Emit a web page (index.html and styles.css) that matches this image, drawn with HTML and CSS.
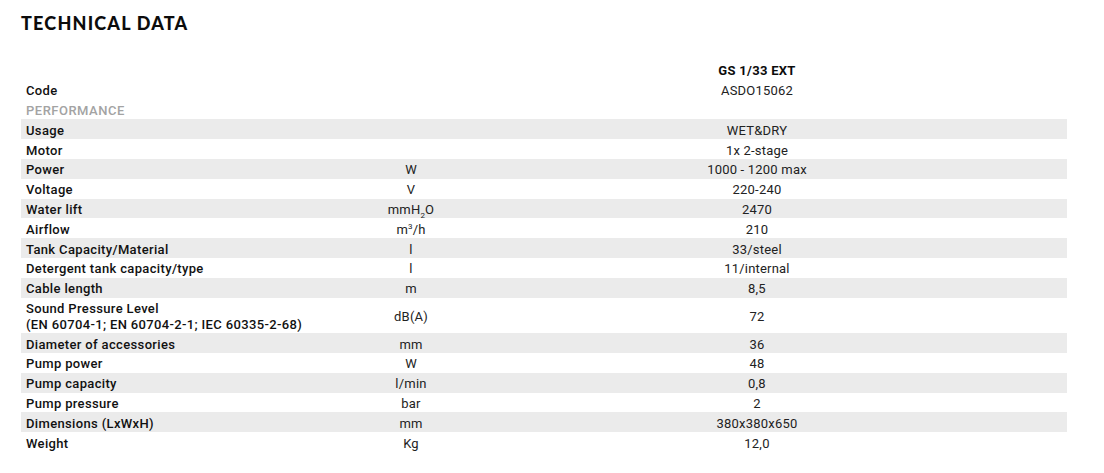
FILE: index.html
```html
<!DOCTYPE html>
<html lang="en">
<head>
<meta charset="utf-8">
<title>Technical data</title>
<link rel="stylesheet" href="styles.css">
</head>
<body>
<div class="page">
  <h2 class="title">TECHNICAL DATA</h2>
  <table class="spec">
    <colgroup><col class="c-label"><col class="c-unit"><col class="c-val"></colgroup>
    <tbody>
      <tr class="head"><td></td><td></td><td class="model">GS 1/33 EXT</td></tr>
      <tr class="head"><td class="lbl">Code</td><td></td><td class="val">ASDO15062</td></tr>
      <tr class="head"><td class="section">PERFORMANCE</td><td></td><td></td></tr>
      <tr class="alt"><td class="lbl">Usage</td><td class="unit"></td><td class="val">WET&amp;DRY</td></tr>
      <tr><td class="lbl">Motor</td><td class="unit"></td><td class="val">1x 2-stage</td></tr>
      <tr class="alt"><td class="lbl">Power</td><td class="unit">W</td><td class="val">1000 - 1200 max</td></tr>
      <tr><td class="lbl">Voltage</td><td class="unit">V</td><td class="val">220-240</td></tr>
      <tr class="alt"><td class="lbl">Water lift</td><td class="unit">mmH<sub>2</sub>O</td><td class="val">2470</td></tr>
      <tr><td class="lbl">Airflow</td><td class="unit">m<sup>3</sup>/h</td><td class="val">210</td></tr>
      <tr class="alt"><td class="lbl">Tank Capacity/Material</td><td class="unit">l</td><td class="val">33/steel</td></tr>
      <tr><td class="lbl">Detergent tank capacity/type</td><td class="unit">l</td><td class="val">11/internal</td></tr>
      <tr class="alt"><td class="lbl">Cable length</td><td class="unit">m</td><td class="val">8,5</td></tr>
      <tr class="tall"><td class="lbl">Sound Pressure Level<br>(EN 60704-1; EN 60704-2-1; IEC 60335-2-68)</td><td class="unit">dB(A)</td><td class="val">72</td></tr>
      <tr class="alt"><td class="lbl">Diameter of accessories</td><td class="unit">mm</td><td class="val">36</td></tr>
      <tr><td class="lbl">Pump power</td><td class="unit">W</td><td class="val">48</td></tr>
      <tr class="alt"><td class="lbl">Pump capacity</td><td class="unit">l/min</td><td class="val">0,8</td></tr>
      <tr><td class="lbl">Pump pressure</td><td class="unit">bar</td><td class="val">2</td></tr>
      <tr class="alt"><td class="lbl">Dimensions (LxWxH)</td><td class="unit">mm</td><td class="val">380x380x650</td></tr>
      <tr><td class="lbl">Weight</td><td class="unit">Kg</td><td class="val">12,0</td></tr>
    </tbody>
  </table>
</div>
</body>
</html>
```
FILE: styles.css
```css
html, body {
  margin: 0;
  padding: 0;
  background: #ffffff;
}
.page {
  padding: 12px 0 0 21px;
  font-family: Roboto, "Liberation Sans", sans-serif;
  color: #111111;
}
.title {
  margin: 0;
  font-family: Lato, "Liberation Sans", sans-serif;
  font-weight: 900;
  font-size: 18px;
  line-height: 22px;
  letter-spacing: 1.2px;
  color: #0c0c0c;
}
.spec {
  margin-top: 26px;
  width: 1046px;
  border-collapse: collapse;
  table-layout: fixed;
  font-size: 13px;
}
.c-label { width: 354px; }
.c-unit { width: 72px; }
.spec td {
  box-sizing: border-box;
  height: 19.8px;
  padding: 3px 0 0 0;
  line-height: 14px;
  vertical-align: middle;
  white-space: nowrap;
}
.spec tr.alt td {
  background: #ebebeb;
}
.spec tr.tall td {
  height: 35.7px;
  line-height: 16px;
}
.lbl {
  padding-left: 5px !important;
  font-weight: 500;
  letter-spacing: 0.35px;
  color: #111111;
}
.section {
  padding-left: 5px !important;
  font-weight: 500;
  letter-spacing: 0.5px;
  color: #a3a3a3;
}
.unit, .val {
  text-align: center;
  font-weight: 400;
  letter-spacing: 0.2px;
  color: #222222;
}
.model {
  text-align: center;
  font-weight: 700;
  letter-spacing: 0.3px;
  color: #0c0c0c;
}
.unit sub, .unit sup {
  font-size: 8px;
  line-height: 0;
}
```
